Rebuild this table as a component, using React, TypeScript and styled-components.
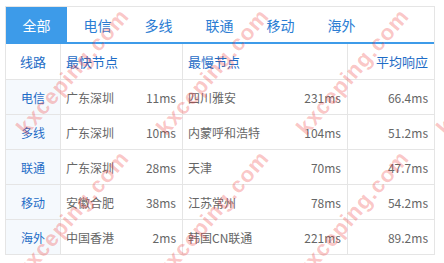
import styled, { createGlobalStyle } from 'styled-components';

interface ILine {
  name: string;
  fast: string;
  fastMs: string;
  slow: string;
  slowMs: string;
  avg: string;
}

const tabs = ['全部', '电信', '多线', '联通', '移动', '海外'];

const lines: ILine[] = [
  { name: '电信', fast: '广东深圳', fastMs: '11ms', slow: '四川雅安', slowMs: '231ms', avg: '66.4ms' },
  { name: '多线', fast: '广东深圳', fastMs: '10ms', slow: '内蒙呼和浩特', slowMs: '104ms', avg: '51.2ms' },
  { name: '联通', fast: '广东深圳', fastMs: '28ms', slow: '天津', slowMs: '70ms', avg: '47.7ms' },
  { name: '移动', fast: '安徽合肥', fastMs: '38ms', slow: '江苏常州', slowMs: '78ms', avg: '54.2ms' },
  { name: '海外', fast: '中国香港', fastMs: '2ms', slow: '韩国CN联通', slowMs: '221ms', avg: '89.2ms' },
];

// watermark tiles: 140px across, 142px down
const marks = [0, 1].flatMap((r) =>
  [0, 1, 2, 3].map((c) => ({ x: 73 + c * 140, y: 72 + r * 142 }))
);

const App = () => (
  <>
    <GlobalStyle />
    <Page>
      <Panel>
        <Tabs>
          {tabs.map((tab, i) => (
            <Tab key={tab} $active={i === 0}>
              {tab}
            </Tab>
          ))}
        </Tabs>
        <HeadRow>
          <LineCell>线路</LineCell>
          <SplitCell>最快节点</SplitCell>
          <SplitCell>最慢节点</SplitCell>
          <AvgCell>平均响应</AvgCell>
        </HeadRow>
        {lines.map((line) => (
          <Row key={line.name}>
            <LineCell $shaded>{line.name}</LineCell>
            <SplitCell>
              <span>{line.fast}</span>
              <span>{line.fastMs}</span>
            </SplitCell>
            <SplitCell>
              <span>{line.slow}</span>
              <span>{line.slowMs}</span>
            </SplitCell>
            <AvgCell>{line.avg}</AvgCell>
          </Row>
        ))}
      </Panel>
      <Watermarks>
        {marks.map(({ x, y }) => (
          <Mark key={`${x}-${y}`} style={{ left: x, top: y }}>
            kxceping.com
          </Mark>
        ))}
      </Watermarks>
    </Page>
  </>
);

export default App;

const GlobalStyle = createGlobalStyle`
  body {
    margin: 0;
    background: #fff;
    font-family: "Noto Sans CJK SC", "Noto Sans", sans-serif;
  }
`;

const Page = styled.div`
  position: relative;
  width: 444px;
  height: 263px;
  padding: 6px 0 0 5px;
  box-sizing: border-box;
  overflow: hidden;
`;

const Panel = styled.div`
  width: 430px;
  border: 1px solid #e5e5e5;
  box-sizing: border-box;
`;

const Tabs = styled.div`
  display: flex;
  height: 37px;
  border-bottom: 2px solid #3d9be9;
  box-sizing: border-box;
`;

const Tab = styled.div<{ $active?: boolean }>`
  width: 61px;
  display: flex;
  align-items: center;
  justify-content: center;
  font-size: 14px;
  color: ${({ $active }) => ($active ? '#fff' : '#2b7dd3')};
  background: ${({ $active }) => ($active ? '#3d9be9' : 'transparent')};
`;

const Row = styled.div`
  display: grid;
  grid-template-columns: 55px 122px 165px 86px;
  height: 35px;
  border-bottom: 1px solid #e5e5e5;
  box-sizing: border-box;
  font-size: 12px;
  color: #666;

  &:last-child {
    height: 34px;
    border-bottom: none;
  }
`;

const HeadRow = styled(Row)`
  height: 36px;
  font-size: 13px;
  color: #1e6cc6;
`;

const Cell = styled.div`
  display: flex;
  align-items: center;
  border-right: 1px solid #e5e5e5;
`;

const LineCell = styled(Cell)<{ $shaded?: boolean }>`
  justify-content: center;
  color: #1e6cc6;
  background: ${({ $shaded }) => ($shaded ? '#f5f9fd' : 'transparent')};
`;

const SplitCell = styled(Cell)`
  justify-content: space-between;
  padding: 0 6px 0 5px;
`;

const AvgCell = styled(Cell)`
  justify-content: flex-end;
  padding-right: 6px;
  border-right: none;
`;

const Watermarks = styled.div`
  position: absolute;
  inset: 0;
  pointer-events: none;
`;

const Mark = styled.span`
  position: absolute;
  transform: translate(-50%, -50%) rotate(-49deg);
  white-space: nowrap;
  font-family: "Liberation Sans", Arial, sans-serif;
  font-weight: 700;
  font-size: 22px;
  letter-spacing: 1px;
  color: rgba(240, 60, 60, 0.3);
`;
